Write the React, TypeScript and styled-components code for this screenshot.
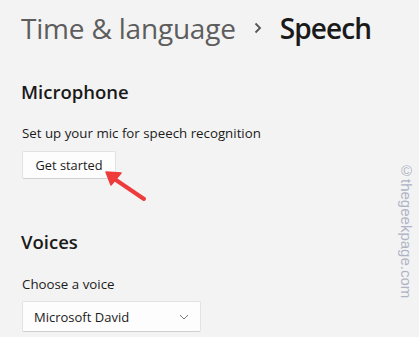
import styled, { createGlobalStyle } from "styled-components";

const GlobalStyle = createGlobalStyle`
  html, body {
    margin: 0;
    padding: 0;
    background: #f3f3f3;
  }
  body {
    font-family: "Open Sans", "Noto Sans", "Liberation Sans", sans-serif;
    color: #1b1b1b;
  }
`;

const Page = styled.div`
  position: relative;
  width: 419px;
  height: 337px;
  overflow: hidden;
  padding: 9px 0 0 21px;
  box-sizing: border-box;
`;

const Breadcrumb = styled.div`
  display: flex;
  align-items: center;
  height: 38px;
  font-size: 28px;
`;

const Crumb = styled.span<{ current?: boolean }>`
  color: ${(p) => (p.current ? "#1a1a1a" : "#5d5d5d")};
  font-weight: ${(p) => (p.current ? 600 : 500)};
  letter-spacing: ${(p) => (p.current ? "-0.9px" : "-0.2px")};
`;

const Sep = styled.span`
  display: flex;
  margin: 0 18px 0 18px;
`;

const Section = styled.section<{ top: number }>`
  margin-top: ${(p) => p.top}px;
  display: flex;
  flex-direction: column;
  align-items: flex-start;
`;

const Heading = styled.h2`
  margin: 0;
  font-size: 18.5px;
  line-height: 24px;
  font-weight: 600;
  color: #1a1a1a;
`;

const Label = styled.div<{ top: number }>`
  margin-top: ${(p) => p.top}px;
  font-size: 13.3px;
  line-height: 18px;
  color: #1b1b1b;
  padding-left: 1px;
`;

const Button = styled.button`
  margin-top: 9px;
  margin-left: 1px;
  width: 94px;
  height: 28px;
  border: 1px solid #e2e2e2;
  border-bottom-color: #d2d2d2;
  border-radius: 2px;
  background: #fdfdfd;
  font-family: inherit;
  font-size: 12.8px;
  color: #1b1b1b;
  padding: 0;
`;

const Select = styled.div`
  margin-top: 8px;
  margin-left: 1px;
  width: 179px;
  height: 31px;
  box-sizing: border-box;
  border: 1px solid #e2e2e2;
  border-bottom-color: #cfcfcf;
  border-radius: 2px;
  background: #fdfdfd;
  display: flex;
  align-items: center;
  justify-content: space-between;
  padding: 0 11px 0 11px;
  font-size: 13px;
  color: #1b1b1b;
`;

const Pointer = styled.svg`
  position: absolute;
  left: 100px;
  top: 166px;
`;

const Watermark = styled.div`
  position: absolute;
  left: 398px;
  top: 162px;
  writing-mode: vertical-rl;
  font-family: "Liberation Sans", Arial, sans-serif;
  font-size: 15px;
  color: #afb3c6;
`;

export default function App() {
  return (
    <>
      <GlobalStyle />
      <Page>
        <Breadcrumb>
          <Crumb>Time &amp; language</Crumb>
          <Sep>
            <svg width="8" height="12" viewBox="0 0 8 12">
              <path d="M1.5 1.5 L6 6 L1.5 10.5" fill="none" stroke="#555" strokeWidth="1.8" />
            </svg>
          </Sep>
          <Crumb current>Speech</Crumb>
        </Breadcrumb>

        <Section top={33}>
          <Heading>Microphone</Heading>
          <Label top={20}>Set up your mic for speech recognition</Label>
          <Button>Get started</Button>
        </Section>

        <Section top={51}>
          <Heading>Voices</Heading>
          <Label top={21}>Choose a voice</Label>
          <Select>
            <span>Microsoft David</span>
            <svg width="10" height="6" viewBox="0 0 10 6">
              <path d="M1 1 L5 5 L9 1" fill="none" stroke="#777" strokeWidth="1" />
            </svg>
          </Select>
        </Section>

        <Pointer width="50" height="40" viewBox="0 0 50 40">
          <line x1="44" y1="33" x2="13" y2="12" stroke="#ee3b3b" strokeWidth="4" strokeLinecap="round" />
          <polygon points="6,6 21,7 11,19" fill="#ee3b3b" stroke="#ee3b3b" strokeWidth="1.5" strokeLinejoin="round" />
        </Pointer>

        <Watermark>©thegeekpage.com</Watermark>
      </Page>
    </>
  );
}
